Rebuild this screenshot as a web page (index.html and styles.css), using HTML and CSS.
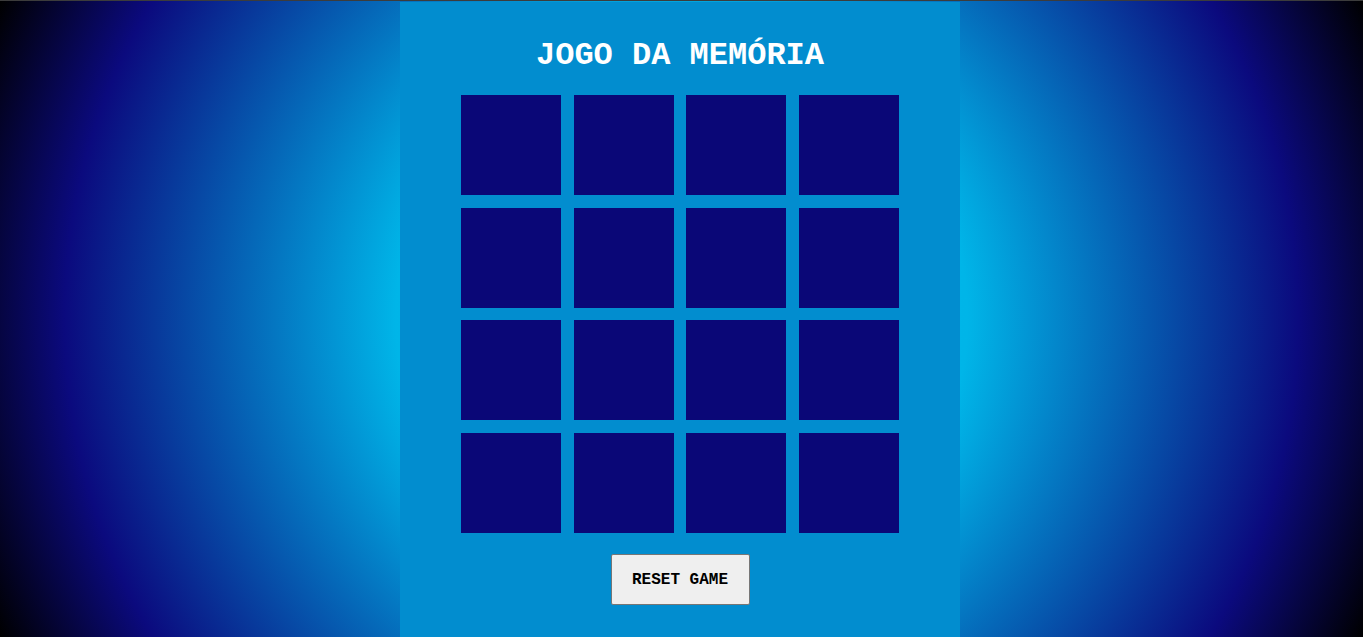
FILE: index.html
```html
<!DOCTYPE html>
<html>
<head>
  <meta charset="utf-8">
  <title>Jogo da Memória</title>
  <link rel="stylesheet" href="styles.css">
</head>
<body>
  <div class="container">
    <h1>JOGO DA MEMÓRIA</h1>
    <div class="game">
      <div class="item"></div>
      <div class="item"></div>
      <div class="item"></div>
      <div class="item"></div>
      <div class="item"></div>
      <div class="item"></div>
      <div class="item"></div>
      <div class="item"></div>
      <div class="item"></div>
      <div class="item"></div>
      <div class="item"></div>
      <div class="item"></div>
      <div class="item"></div>
      <div class="item"></div>
      <div class="item"></div>
      <div class="item"></div>
    </div>
    <button class="reset">RESET GAME</button>
  </div>
</body>
</html>
```

FILE: styles.css
```css
* {
  box-sizing: border-box;
}
html, body {
  height: 100%;
}
body {
  margin: 0;
  padding: 1px 3px 0 0;
  border-top: 1px solid #3c3c3c;
  display: flex;
  justify-content: center;
  background: radial-gradient(circle, #00c0f0 0%, #00b5e8 38%, #0b0a7e 82%, #000 100%);
  font-family: "Courier New", "Liberation Mono", monospace;
  overflow: hidden;
}
.container {
  width: 560px;
  height: 100%;
  background: #028dcf;
  display: flex;
  flex-direction: column;
  align-items: center;
  padding-top: 36px;
}
h1 {
  margin: 0;
  font-size: 32px;
  line-height: 36px;
  color: #fff;
  font-weight: bold;
}
.game {
  display: grid;
  grid-template-columns: repeat(4, 100px);
  gap: 12.5px;
  margin-top: 21px;
}
.item {
  width: 100px;
  height: 100px;
  background: #0a0777;
}
.reset {
  margin-top: 21px;
  width: 139px;
  height: 51px;
  padding-top: 2px;
  background: #efefef;
  border: 1px solid #767676;
  border-radius: 2px;
  font-family: "Courier New", "Liberation Mono", monospace;
  font-size: 16px;
  font-weight: bold;
  color: #000;
  cursor: pointer;
}
```
